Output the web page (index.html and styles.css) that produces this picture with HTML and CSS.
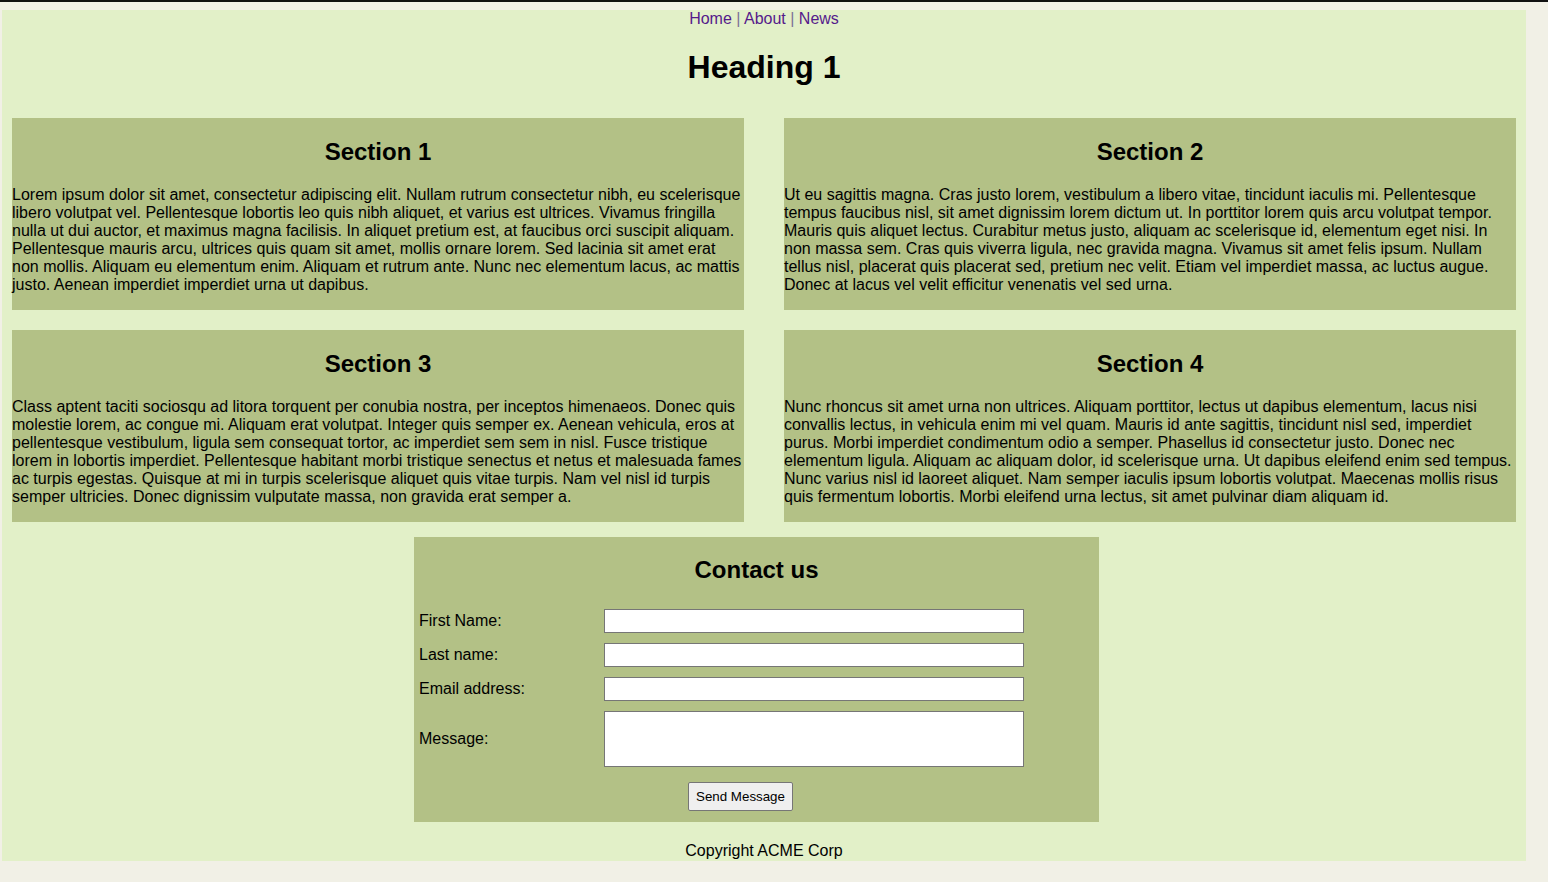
FILE: index.html
```html
<!DOCTYPE html>
<html lang="en">
<head>
<meta charset="utf-8">
<title>ACME</title>
<link rel="stylesheet" href="styles.css">
</head>
<body>
<div class="page">
  <nav class="nav"><a href="#">Home</a> <span class="sep">|</span> <a href="#">About</a> <span class="sep">|</span> <a href="#">News</a></nav>
  <h1 class="title">Heading 1</h1>
  <div class="sections">
    <section class="section">
      <h2>Section 1</h2>
      <p>Lorem ipsum dolor sit amet, consectetur adipiscing elit. Nullam rutrum consectetur nibh, eu scelerisque libero volutpat vel. Pellentesque lobortis leo quis nibh aliquet, et varius est ultrices. Vivamus fringilla nulla ut dui auctor, et maximus magna facilisis. In aliquet pretium est, at faucibus orci suscipit aliquam. Pellentesque mauris arcu, ultrices quis quam sit amet, mollis ornare lorem. Sed lacinia sit amet erat non mollis. Aliquam eu elementum enim. Aliquam et rutrum ante. Nunc nec elementum lacus, ac mattis justo. Aenean imperdiet imperdiet urna ut dapibus.</p>
    </section>
    <section class="section">
      <h2>Section 2</h2>
      <p>Ut eu sagittis magna. Cras justo lorem, vestibulum a libero vitae, tincidunt iaculis mi. Pellentesque tempus faucibus nisl, sit amet dignissim lorem dictum ut. In porttitor lorem quis arcu volutpat tempor. Mauris quis aliquet lectus. Curabitur metus justo, aliquam ac scelerisque id, elementum eget nisi. In non massa sem. Cras quis viverra ligula, nec gravida magna. Vivamus sit amet felis ipsum. Nullam tellus nisl, placerat quis placerat sed, pretium nec velit. Etiam vel imperdiet massa, ac luctus augue. Donec at lacus vel velit efficitur venenatis vel sed urna.</p>
    </section>
    <section class="section">
      <h2>Section 3</h2>
      <p>Class aptent taciti sociosqu ad litora torquent per conubia nostra, per inceptos himenaeos. Donec quis molestie lorem, ac congue mi. Aliquam erat volutpat. Integer quis semper ex. Aenean vehicula, eros at pellentesque vestibulum, ligula sem consequat tortor, ac imperdiet sem sem in nisl. Fusce tristique lorem in lobortis imperdiet. Pellentesque habitant morbi tristique senectus et netus et malesuada fames ac turpis egestas. Quisque at mi in turpis scelerisque aliquet quis vitae turpis. Nam vel nisl id turpis semper ultricies. Donec dignissim vulputate massa, non gravida erat semper a.</p>
    </section>
    <section class="section">
      <h2>Section 4</h2>
      <p>Nunc rhoncus sit amet urna non ultrices. Aliquam porttitor, lectus ut dapibus elementum, lacus nisi convallis lectus, in vehicula enim mi vel quam. Mauris id ante sagittis, tincidunt nisl sed, imperdiet purus. Morbi imperdiet condimentum odio a semper. Phasellus id consectetur justo. Donec nec elementum ligula. Aliquam ac aliquam dolor, id scelerisque urna. Ut dapibus eleifend enim sed tempus. Nunc varius nisl id laoreet aliquet. Nam semper iaculis ipsum lobortis volutpat. Maecenas mollis risus quis fermentum lobortis. Morbi eleifend urna lectus, sit amet pulvinar diam aliquam id.</p>
    </section>
  </div>
  <div class="contact">
    <h2>Contact us</h2>
    <form class="form">
      <label class="label" for="fn">First Name:</label>
      <input class="field" id="fn" type="text">
      <label class="label" for="ln">Last name:</label>
      <input class="field" id="ln" type="text">
      <label class="label" for="em">Email address:</label>
      <input class="field" id="em" type="text">
      <label class="label" for="msg">Message:</label>
      <textarea class="field area" id="msg"></textarea>
      <div class="actions"><button type="button" class="btn">Send Message</button></div>
    </form>
  </div>
  <footer class="footer">Copyright ACME Corp</footer>
</div>
</body>
</html>
```

FILE: styles.css
```css
html, body {
  margin: 0;
  padding: 0;
}
body {
  background: #f1f0e6;
  border-top: 2px solid #111;
  font-family: "Liberation Sans", Arial, sans-serif;
  font-size: 16px;
  color: #000;
  height: 880px;
  overflow: hidden;
}
.page {
  background: #e2f0c8;
  margin: 8px 22px 0 2px;
  display: flow-root;
}
.nav {
  text-align: center;
  line-height: 18px;
}
.nav a {
  color: #551a8b;
  text-decoration: none;
}
.nav .sep {
  color: #7a6f96;
}
.title {
  text-align: center;
  font-size: 32px;
  margin: 21.44px 0;
}
.sections {
  display: grid;
  grid-template-columns: 1fr 1fr;
  column-gap: 40px;
  row-gap: 20px;
  padding: 10px;
}
.section {
  background: #b3c186;
}
.section h2 {
  text-align: center;
  font-size: 24px;
  margin: 19.92px 0;
}
.section p {
  margin: 0 0 16px;
  line-height: 18px;
}
.contact {
  background: #b3c186;
  width: 685px;
  margin: 5px 0 0 412px;
  display: flow-root;
  padding-bottom: 11px;
}
.contact h2 {
  text-align: center;
  font-size: 24px;
  margin: 19.92px 0 24.5px;
}
.form {
  display: grid;
  grid-template-columns: 185px 420px;
  row-gap: 10px;
  padding-left: 5px;
  align-items: center;
}
.label {
  font-size: 16px;
}
.field {
  box-sizing: border-box;
  width: 420px;
  height: 24px;
  margin: 0;
  border: 1px solid #767676;
  border-radius: 0;
  background: #fff;
  font-family: inherit;
}
.area {
  height: 56px;
  resize: none;
}
.actions {
  grid-column: 1 / span 2;
  padding-left: 269px;
  margin-top: 5px;
}
.btn {
  box-sizing: border-box;
  width: 105px;
  height: 29px;
  font-family: "Liberation Sans", Arial, sans-serif;
  font-size: 13.33px;
  background: #efefef;
  border: 1px solid #767676;
  border-radius: 2px;
  color: #000;
  padding: 0;
}
.footer {
  text-align: center;
  padding: 20px 0 1px;
  line-height: 18px;
}
```
